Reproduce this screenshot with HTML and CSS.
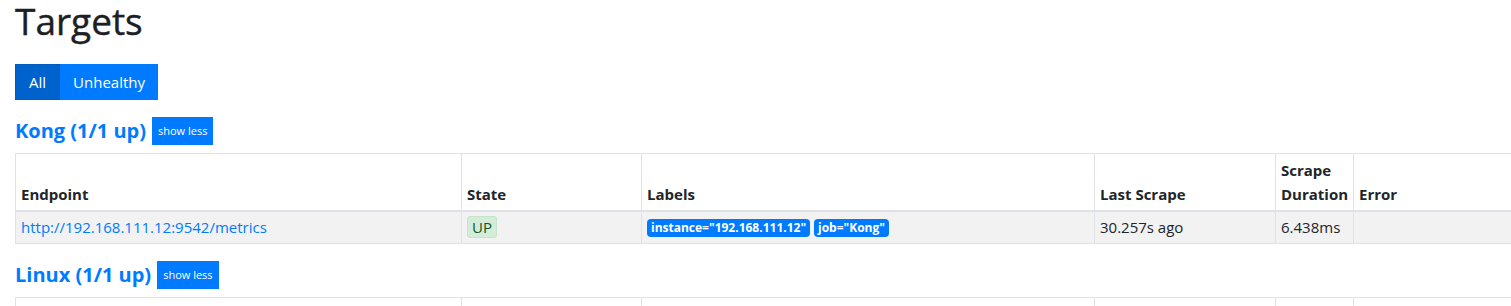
FILE: index.html
```html
<!DOCTYPE html>
<html lang="en">
<head>
    <meta charset="UTF-8">
    <title>Prometheus Time Series Collection and Processing Server</title>
    <link rel="stylesheet" href="styles.css">
</head>
<body>
    <div class="container">
        <h1 class="title">Targets</h1>
        <div class="btn-group">
            <button class="btn btn--active">All</button>
            <button class="btn">Unhealthy</button>
        </div>

        <section class="pool">
            <div class="pool__head">
                <a class="pool__name" href="#pool-kong">Kong (1/1 up)</a>
                <button class="btn-xs">show less</button>
            </div>
            <table class="targets">
                <colgroup>
                    <col class="targets__col--endpoint">
                    <col class="targets__col--state">
                    <col class="targets__col--labels">
                    <col class="targets__col--scrape">
                    <col class="targets__col--duration">
                    <col class="targets__col--error">
                </colgroup>
                <thead>
                    <tr>
                        <th>Endpoint</th>
                        <th>State</th>
                        <th>Labels</th>
                        <th>Last Scrape</th>
                        <th>Scrape Duration</th>
                        <th>Error</th>
                    </tr>
                </thead>
                <tbody>
                    <tr>
                        <td><a class="targets__link" href="#">http://192.168.111.12:9542/metrics</a></td>
                        <td><span class="state state--up">UP</span></td>
                        <td>
                            <span class="label">instance="192.168.111.12"</span>
                            <span class="label">job="Kong"</span>
                        </td>
                        <td>30.257s ago</td>
                        <td>6.438ms</td>
                        <td></td>
                    </tr>
                </tbody>
            </table>
        </section>

        <section class="pool">
            <div class="pool__head">
                <a class="pool__name" href="#pool-linux">Linux (1/1 up)</a>
                <button class="btn-xs">show less</button>
            </div>
            <table class="targets">
                <colgroup>
                    <col class="targets__col--endpoint">
                    <col class="targets__col--state">
                    <col class="targets__col--labels">
                    <col class="targets__col--scrape">
                    <col class="targets__col--duration">
                    <col class="targets__col--error">
                </colgroup>
                <thead>
                    <tr>
                        <th>Endpoint</th>
                        <th>State</th>
                        <th>Labels</th>
                        <th>Last Scrape</th>
                        <th>Scrape Duration</th>
                        <th>Error</th>
                    </tr>
                </thead>
                <tbody>
                    <tr>
                        <td><a class="targets__link" href="#">http://192.168.111.12:9100/metrics</a></td>
                        <td><span class="state state--up">UP</span></td>
                        <td>
                            <span class="label">instance="192.168.111.12"</span>
                            <span class="label">job="Linux"</span>
                        </td>
                        <td>12.104s ago</td>
                        <td>18.215ms</td>
                        <td></td>
                    </tr>
                </tbody>
            </table>
        </section>
    </div>
</body>
</html>
```

FILE: styles.css
```css
body {
    margin: 0;
    font-family: "Segoe UI", "Open Sans", sans-serif;
    font-size: 15px;
    line-height: 24px;
    color: #212529;
    background-color: #fff;
    overflow-x: hidden;
}
.container {
    padding: 0 15px;
}
.title {
    margin: 0 0 22px;
    font-size: 37px;
    font-weight: 400;
    line-height: 42px;
    color: #1c2024;
    -webkit-text-stroke: 0.4px #1c2024;
}
.btn-group {
    display: flex;
}
.btn {
    padding: 6px 12px;
    font-family: inherit;
    font-size: 15px;
    line-height: 22px;
    color: #fff;
    background-color: #007bff;
    border: 1px solid #007bff;
    border-radius: 0;
}
.btn--active {
    padding: 6px 13px;
    background-color: #0062cc;
    border-color: #005cbf;
}
.pool {
    margin-top: 17px;
}
.pool__head {
    display: flex;
    align-items: center;
    gap: 6px;
    margin-bottom: 8px;
}
.pool__name {
    font-size: 20px;
    font-weight: 700;
    line-height: 28px;
    color: #007bff;
    text-decoration: none;
}
.btn-xs {
    height: 28px;
    padding: 0 5px;
    font-family: inherit;
    font-size: 11px;
    line-height: 26px;
    color: #fff;
    background-color: #007bff;
    border: 1px solid #007bff;
    border-radius: 0;
}
.targets {
    border-collapse: collapse;
    table-layout: fixed;
    width: 1700px;
    border: 1px solid #dee2e6;
}
.targets__col--endpoint { width: 446px; }
.targets__col--state { width: 180px; }
.targets__col--labels { width: 453px; }
.targets__col--scrape { width: 181px; }
.targets__col--duration { width: 78px; }
.targets__col--error { width: 362px; }
.targets th,
.targets td {
    padding: 4px 5px;
    text-align: left;
    border: 1px solid #dee2e6;
}
.targets th {
    vertical-align: bottom;
    font-weight: 700;
    border-bottom-width: 2px;
}
.targets td {
    line-height: 23px;
    vertical-align: top;
}
.targets tbody tr {
    background-color: #f2f2f2;
}
.targets__link {
    color: #007bff;
    text-decoration: none;
}
.state {
    display: inline-block;
    padding: 2px 4px;
    font-size: 15px;
    line-height: 16px;
    border: 1px solid #c3e6cb;
    border-radius: 3px;
}
.state--up {
    color: #155724;
    background-color: #d4edda;
}
.label {
    display: inline-block;
    padding: 3px 4px;
    font-size: 12px;
    font-weight: 700;
    line-height: 1;
    color: #fff;
    background-color: #007bff;
    border-radius: 4px;
    vertical-align: 1px;
}
```
